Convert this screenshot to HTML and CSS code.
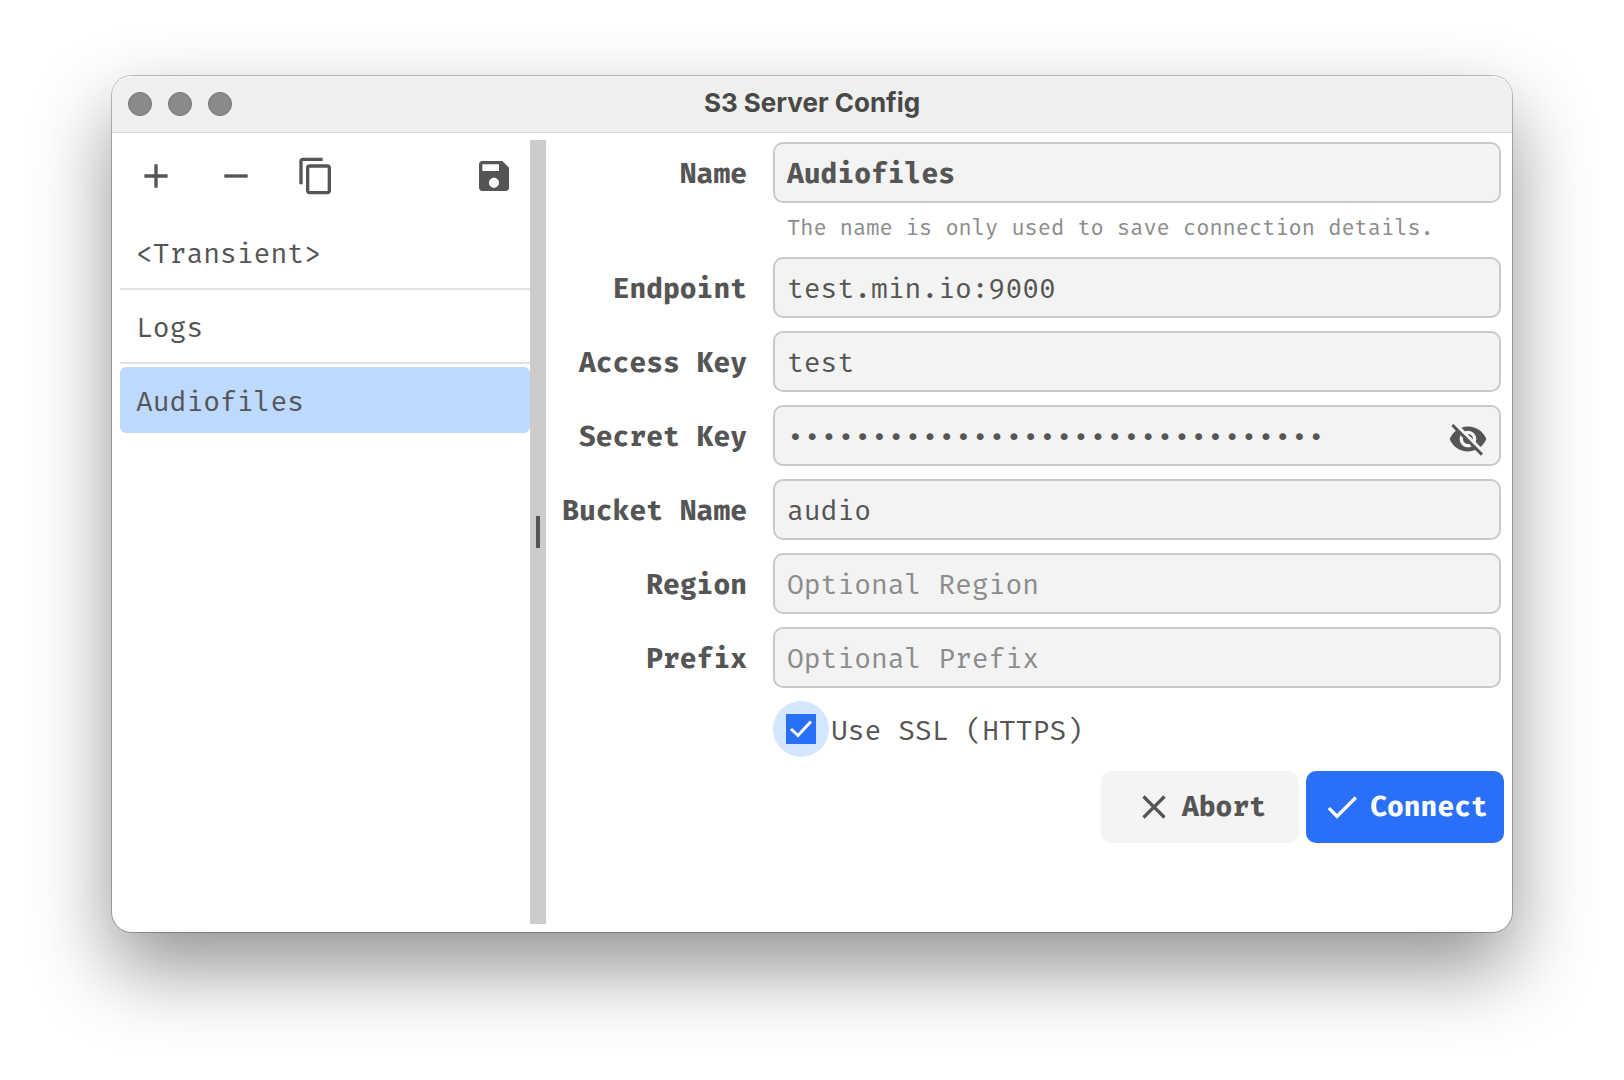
FILE: index.html
```html
<!DOCTYPE html>
<html lang="en">
<head>
<meta charset="utf-8">
<meta name="viewport" content="width=device-width, initial-scale=1">
<title>S3 Server Config</title>
<link rel="stylesheet" href="styles.css">
</head>
<body>
<main class="window">
  <header class="titlebar">
    <div class="lights"><span class="light"></span><span class="light"></span><span class="light"></span></div>
    <h1 class="title">S3 Server Config</h1>
  </header>
  <div class="content">
    <aside class="sidebar">
      <div class="toolbar">
        <button class="tool" type="button" aria-label="Add"><svg class="icon" viewBox="0 0 24 24"><path d="M19 13h-6v6h-2v-6H5v-2h6V5h2v6h6v2z"/></svg></button>
        <button class="tool" type="button" aria-label="Remove"><svg class="icon" viewBox="0 0 24 24"><path d="M19 13H5v-2h14v2z"/></svg></button>
        <button class="tool" type="button" aria-label="Copy"><svg class="icon" viewBox="0 0 24 24"><path d="M16 1H4c-1.100 0-2 .9-2 2v14h2V3h12V1zm3 4H8c-1.100 0-2 .9-2 2v14c0 1.100.9 2 2 2h11c1.100 0 2-.9 2-2V7c0-1.100-.9-2-2-2zm0 16H8V7h11v14z"/></svg></button>
        <button class="tool tool-save" type="button" aria-label="Save"><svg class="icon" viewBox="0 0 24 24"><path d="M17 3H5c-1.110 0-2 .9-2 2v14c0 1.100.89 2 2 2h14c1.100 0 2-.9 2-2V7l-4-4zm-5 16c-1.660 0-3-1.340-3-3s1.340-3 3-3 3 1.340 3 3-1.340 3-3 3zm3-10H5V5h10v4z"/></svg></button>
      </div>
      <ul class="connections">
        <li class="entry"><button class="connection" type="button">&lt;Transient&gt;</button></li>
        <li class="entry"><button class="connection" type="button">Logs</button></li>
        <li class="entry"><button class="connection selected" type="button">Audiofiles</button></li>
      </ul>
    </aside>
    <div class="splitter" role="separator" aria-orientation="vertical"><span class="grip"></span></div>
    <form class="details">
      <div class="fields">
        <label class="label" for="name">Name</label>
        <input class="input strong" id="name" type="text" value="Audiofiles" aria-describedby="name-hint">
        <p class="hint" id="name-hint">The name is only used to save connection details.</p>
        <label class="label" for="endpoint">Endpoint</label>
        <input class="input" id="endpoint" type="text" value="test.min.io:9000">
        <label class="label" for="access">Access Key</label>
        <input class="input" id="access" type="text" value="test">
        <label class="label" for="secret">Secret Key</label>
        <div class="secret">
          <input class="input" id="secret" type="password" value="abcdefghijklmnopqrstuvwxyz012345">
          <button class="reveal" type="button" aria-label="Show secret key"><svg class="icon" viewBox="0 0 24 24"><path d="M12 7c2.760 0 5 2.240 5 5 0 .65-.13 1.260-.36 1.830l2.920 2.920c1.510-1.260 2.700-2.890 3.430-4.750-1.730-4.390-6-7.500-11-7.500-1.400 0-2.740.25-3.980.7l2.160 2.160C10.740 7.130 11.350 7 12 7zM2 4.270l2.280 2.280.46.46C3.080 8.300 1.780 10.020 1 12c1.730 4.390 6 7.500 11 7.500 1.550 0 3.030-.3 4.380-.84l.42.42L19.730 22 21 20.730 3.270 3 2 4.270zM7.530 9.800l1.550 1.550c-.05.21-.08.43-.08.65 0 1.660 1.340 3 3 3 .22 0 .44-.03.65-.08l1.550 1.550c-.67.33-1.410.53-2.200.53-2.760 0-5-2.240-5-5 0-.79.2-1.530.53-2.200zm4.310-.78l3.150 3.150.02-.16c0-1.660-1.340-3-3-3l-.17.01z"/></svg></button>
        </div>
        <label class="label" for="bucket">Bucket Name</label>
        <input class="input" id="bucket" type="text" value="audio">
        <label class="label" for="region">Region</label>
        <input class="input" id="region" type="text" placeholder="Optional Region">
        <label class="label" for="prefix">Prefix</label>
        <input class="input" id="prefix" type="text" placeholder="Optional Prefix">
        <div class="ssl">
          <span class="halo">
            <input class="check" id="ssl" type="checkbox" checked>
            <svg class="tick" viewBox="0 0 30 30"><path d="M5 15l7 6.500L25 7.500" fill="none" stroke="#fff" stroke-width="3"/></svg>
          </span>
          <label class="ssl-label" for="ssl">Use SSL (HTTPS)</label>
        </div>
      </div>
      <div class="actions">
        <button class="action" type="button"><svg class="icon" viewBox="0 0 24 24"><path d="M19 6.410L17.590 5 12 10.590 6.410 5 5 6.410 10.590 12 5 17.590 6.410 19 12 13.410 17.590 19 19 17.590 13.410 12z"/></svg>Abort</button>
        <button class="action primary" type="submit"><svg class="icon" viewBox="0 0 24 24"><path d="M9 16.170L4.830 12l-1.420 1.410L9 19 21 7l-1.410-1.410z"/></svg>Connect</button>
      </div>
    </form>
  </div>
</main>
</body>
</html>
```
FILE: styles.css
```css
* { box-sizing: border-box; }

body {
  margin: 0;
  min-height: 100vh;
  padding: 76px 112px 148px;
  display: flex;
  background: #fff;
  color: #555;
  font: 28px/36px "Fira Mono", "Liberation Mono", monospace;
}

button, input { font: inherit; color: inherit; }

button {
  padding: 0;
  border: 0;
  background: none;
}

.icon {
  display: block;
  flex: none;
  width: 40px;
  height: 40px;
  fill: currentColor;
}

.window {
  flex: 1;
  min-width: 0;
  display: flex;
  flex-direction: column;
  border-radius: 20px;
  background: #fff;
  box-shadow: 0 0 0 1px rgba(0, 0, 0, .25), 0 36px 80px rgba(0, 0, 0, .43);
}

.titlebar {
  display: grid;
  grid-template-columns: 1fr auto 1fr;
  align-items: center;
  height: 56px;
  padding: 0 16px;
  border-radius: 20px 20px 0 0;
  background: #efefed;
  box-shadow: inset 0 1px 0 #f9f9f8, 0 1px 0 #d9d9d9;
}

.lights { display: flex; gap: 16px; }

.light {
  width: 24px;
  height: 24px;
  border: 1px solid #747473;
  border-radius: 50%;
  background: #8a8a88;
}

.title {
  margin: 0;
  padding-bottom: 2px;
  color: #484848;
  font: 700 26px/32px Inter, "Liberation Sans", sans-serif;
}

.content {
  flex: 1;
  display: flex;
  padding: 8px;
}

.sidebar { flex: 0 0 410px; }

.toolbar { display: flex; gap: 8px; }

.tool {
  display: grid;
  place-items: center;
  width: 72px;
  height: 72px;
}

.tool-save { margin-left: auto; }

.connections {
  margin: 4px 0 0;
  padding: 0;
  list-style: none;
}

.entry { padding: 3px 0; }
.entry + .entry { border-top: 2px solid #e2e2e2; }

.connection {
  display: block;
  width: 100%;
  height: 66px;
  padding: 3px 16px 0;
  border-radius: 6px;
  text-align: left;
}

.connection.selected { background: #bdd9ff; }

.splitter {
  flex: none;
  display: grid;
  place-items: center;
  width: 16px;
  background: #cccccc;
}

.grip {
  width: 4px;
  height: 32px;
  background: #555;
}

.details {
  flex: 1;
  min-width: 0;
  padding: 2px 0 0 8px;
}

.fields {
  display: grid;
  grid-template-columns: 193px 1fr;
  gap: 13px 26px;
  align-items: center;
  padding-right: 3px;
}

.label {
  padding-top: 3px;
  font-weight: 700;
  text-align: right;
}

.input {
  display: block;
  width: 100%;
  height: 61px;
  padding: 1px 12px 0;
  border: 2px solid #c9c9c9;
  border-radius: 10px;
  outline: 0;
  background: #f3f3f3;
}

.input::placeholder { color: #8c8c8c; opacity: 1; }
.strong { font-weight: 700; }

.hint {
  grid-column: 2;
  margin: 0;
  padding: 0 0 4px 14px;
  color: #8c8c8c;
  font-size: 22px;
  line-height: 24px;
}

.secret { position: relative; }
.secret .input { padding-right: 60px; }

.reveal {
  position: absolute;
  top: 14px;
  right: 13px;
}

.ssl {
  grid-column: 2;
  display: flex;
  align-items: center;
}

.ssl-label { padding: 3px 0 0 2px; }

.halo {
  position: relative;
  display: grid;
  place-items: center;
  width: 56px;
  height: 56px;
  border-radius: 50%;
  background: #d5e6ff;
}

.check {
  appearance: none;
  width: 30px;
  height: 30px;
  margin: 0;
  background: #296ff7;
}

.tick {
  position: absolute;
  inset: 13px;
  width: 30px;
  height: 30px;
  pointer-events: none;
}

.actions {
  display: flex;
  justify-content: flex-end;
  gap: 7px;
  margin-top: 14px;
}

.action {
  display: flex;
  align-items: center;
  justify-content: center;
  gap: 8px;
  width: 198px;
  height: 72px;
  border-radius: 10px;
  background: #f4f4f4;
  font-weight: 700;
}

.primary { background: #296ff7; color: #fff; }
```
